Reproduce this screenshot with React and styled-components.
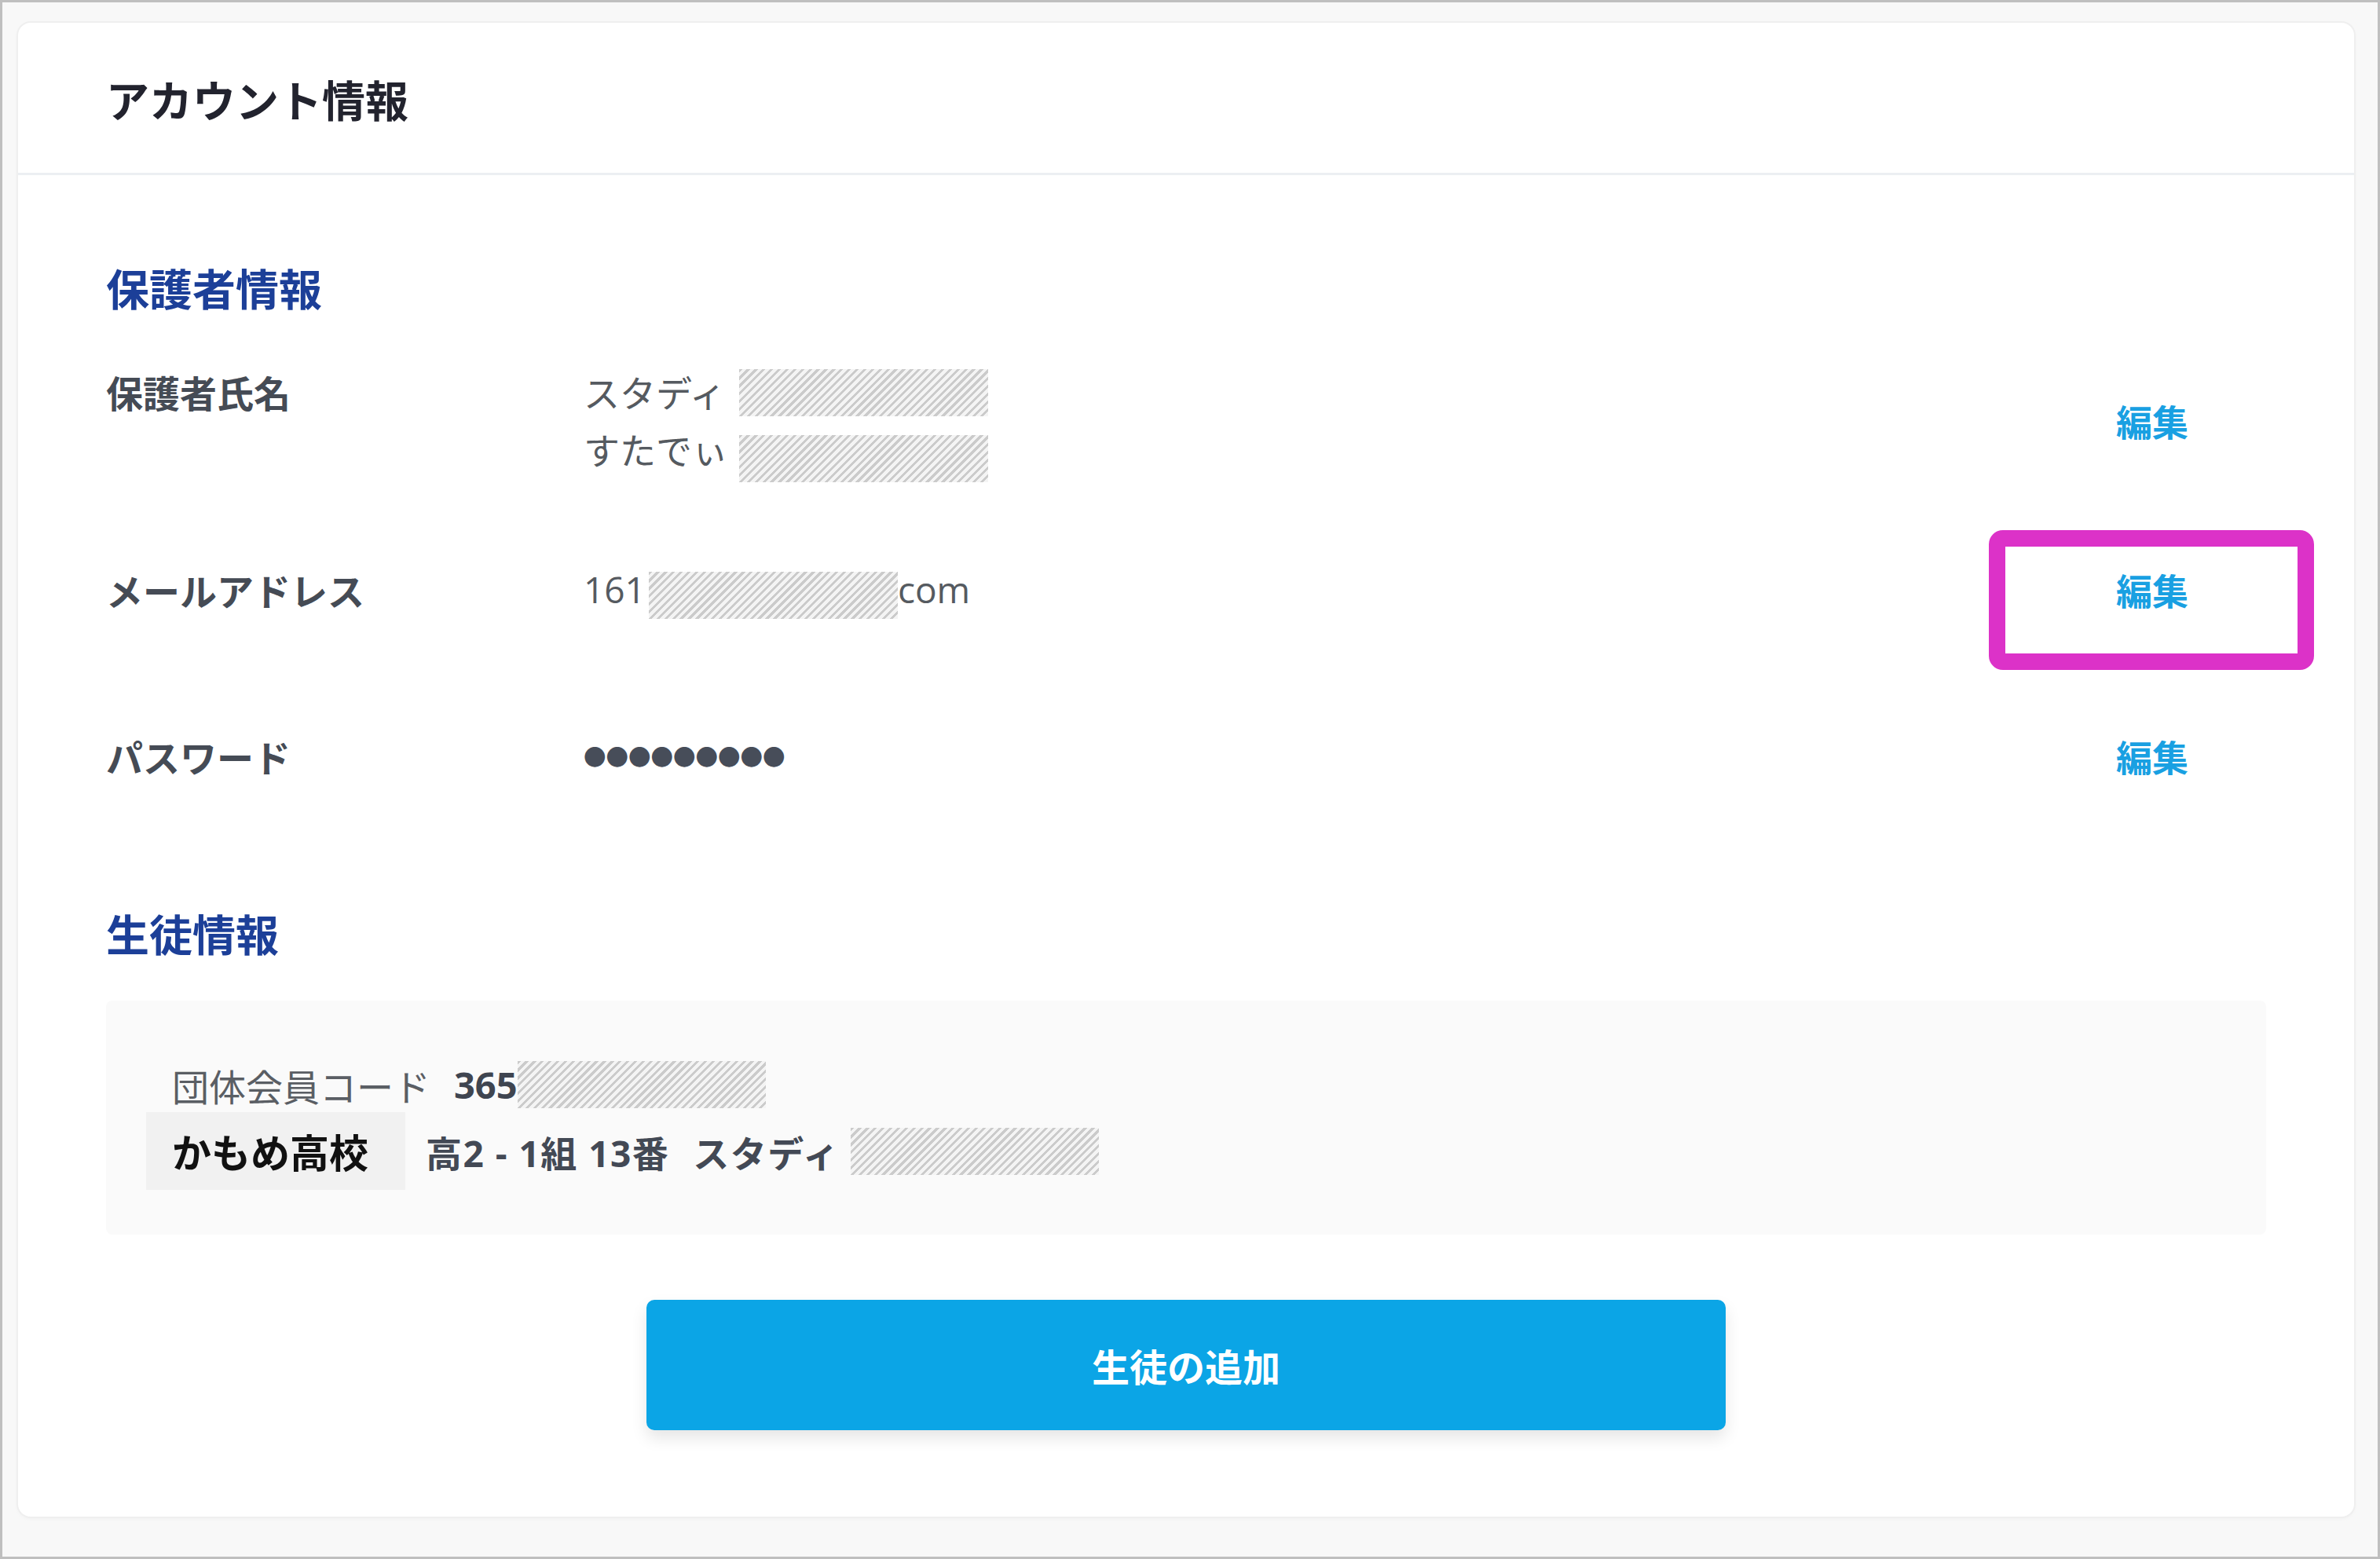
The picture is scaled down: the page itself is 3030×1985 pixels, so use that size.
import React from "react";
import styled, { createGlobalStyle } from "styled-components";

const GlobalStyle = createGlobalStyle`
  html, body {
    margin: 0;
    padding: 0;
  }
  body {
    font-family: "Open Sans", "Noto Sans CJK JP", sans-serif;
    background: #f8f8f8;
  }
`;

const jp = `"Noto Sans CJK JP", sans-serif`;

const Frame = styled.div`
  box-sizing: border-box;
  width: 3030px;
  height: 1985px;
  border: 3px solid #bfbfbf;
  padding: 26px 30px 0 20px;
  background: #f8f8f8;
`;

const Card = styled.section`
  background: #fff;
  border-radius: 16px;
  box-shadow: 0 0 0 2px #efefef, 0 2px 6px rgba(0, 0, 0, 0.04);
  padding-bottom: 110px;
`;

const CardHeader = styled.header`
  box-sizing: border-box;
  height: 194px;
  display: flex;
  align-items: center;
  padding: 0 0 0 112px;
  border-bottom: 3px solid #eceff2;
`;

const CardTitle = styled.h1`
  margin: 0;
  font-family: ${jp};
  font-size: 55px;
  font-weight: 700;
  color: #22232e;
`;

const CardBody = styled.div`
  padding: 0 112px;
`;

const SectionTitle = styled.h2`
  margin: ${(p) => p.$top}px 0 0;
  font-family: ${jp};
  font-size: 55px;
  line-height: 73px;
  font-weight: 700;
  color: #1c3f98;
`;

const Row = styled.div`
  display: grid;
  grid-template-columns: 608px 1fr 290px;
  margin-top: ${(p) => p.$top}px;
  line-height: 73px;
`;

const Label = styled.div`
  font-family: ${jp};
  font-size: 47px;
  font-weight: 700;
  color: #454b55;
`;

const Value = styled.div`
  font-size: 46px;
  color: #555a60;
`;

const Line = styled.div`
  display: flex;
  align-items: center;
  height: 73px;
`;

const NameText = styled.span`
  display: inline-block;
  width: 190px;
  font-family: ${jp};
`;

const Hatch = styled.span`
  display: inline-block;
  flex-shrink: 0;
  width: ${(p) => p.$w}px;
  height: ${(p) => p.$h}px;
  margin-left: ${(p) => p.$ml || 0}px;
  margin-top: ${(p) => p.$mt || 0}px;
  background: repeating-linear-gradient(
    135deg,
    #cbcbcb 0 3px,
    #f4f4f4 3px 7px
  );
`;

const Dots = styled.span`
  font-family: ${jp};
  font-size: 28.5px;
  color: #474d59;
`;

const EditCell = styled.div`
  position: relative;
  display: flex;
  align-items: center;
  justify-content: center;
`;

const EditLink = styled.a`
  font-family: ${jp};
  font-size: 46px;
  font-weight: 700;
  color: #19a0e2;
  cursor: pointer;
`;

const Highlight = styled.span`
  position: absolute;
  left: -63px;
  top: -39px;
  width: 414px;
  height: 178px;
  box-sizing: border-box;
  border: 21px solid #dc32c8;
  border-radius: 18px;
  pointer-events: none;
`;

const StudentBox = styled.div`
  margin-top: 50px;
  padding: 77px 51px 57px;
  background: #fafafa;
  border-radius: 8px;
`;

const CodeLine = styled.div`
  display: flex;
  align-items: center;
  height: 60px;
  padding-left: 33px;
  font-size: 47px;
  color: #5a5e64;
`;

const CodeLabel = styled.span`
  font-family: ${jp};
`;

const CodeNumber = styled.span`
  margin-left: 30px;
  font-weight: 700;
  color: #3f4550;
`;

const StudentRow = styled.div`
  display: flex;
  align-items: center;
  margin-top: 5px;
`;

const School = styled.div`
  height: 99px;
  line-height: 99px;
  padding: 0 47px 0 33px;
  background: #f1f1f1;
  font-family: ${jp};
  font-size: 50px;
  font-weight: 700;
  color: #111;
`;

const StudentInfo = styled.div`
  display: flex;
  align-items: center;
  margin-left: 26px;
  font-size: 46px;
  font-weight: 700;
  letter-spacing: 1.5px;
  color: #434955;
  white-space: pre;
`;

const StudentName = styled.span`
  margin-left: 30px;
  font-family: ${jp};
`;

const AddButton = styled.button`
  display: block;
  width: 1374px;
  height: 166px;
  margin: 83px auto 0;
  border: none;
  border-radius: 10px;
  background: #0ba5e6;
  box-shadow: 0 10px 20px rgba(0, 0, 0, 0.1);
  color: #fff;
  font-family: ${jp};
  font-size: 48px;
  font-weight: 700;
  cursor: pointer;
`;

export default function App() {
  return (
    <>
      <GlobalStyle />
      <Frame>
        <Card>
          <CardHeader>
            <CardTitle>アカウント情報</CardTitle>
          </CardHeader>
          <CardBody>
            <SectionTitle $top={106}>保護者情報</SectionTitle>

            <Row $top={60}>
              <Label>保護者氏名</Label>
              <Value>
                <Line>
                  <NameText>スタディ</NameText>
                  <Hatch $w={317} $h={60} $ml={8} $mt={2} />
                </Line>
                <Line>
                  <NameText>すたでぃ</NameText>
                  <Hatch $w={317} $h={60} $ml={8} $mt={25} />
                </Line>
              </Value>
              <EditCell>
                <EditLink>編集</EditLink>
              </EditCell>
            </Row>

            <Row $top={106}>
              <Label>メールアドレス</Label>
              <Value>
                <Line>
                  161
                  <Hatch $w={317} $h={60} $ml={4} $mt={14} />
                  com
                </Line>
              </Value>
              <EditCell>
                <EditLink>編集</EditLink>
                <Highlight />
              </EditCell>
            </Row>

            <Row $top={139}>
              <Label>パスワード</Label>
              <Value>
                <Line>
                  <Dots>●●●●●●●●●</Dots>
                </Line>
              </Value>
              <EditCell>
                <EditLink>編集</EditLink>
              </EditCell>
            </Row>

            <SectionTitle $top={152}>生徒情報</SectionTitle>

            <StudentBox>
              <CodeLine>
                <CodeLabel>団体会員コード</CodeLabel>
                <CodeNumber>365</CodeNumber>
                <Hatch $w={316} $h={60} />
              </CodeLine>
              <StudentRow>
                <School>かもめ高校</School>
                <StudentInfo>
                  <span>高2 - 1組 13番</span>
                  <StudentName>スタディ</StudentName>
                  <Hatch $w={316} $h={60} $ml={14} />
                </StudentInfo>
              </StudentRow>
            </StudentBox>

            <AddButton>生徒の追加</AddButton>
          </CardBody>
        </Card>
      </Frame>
    </>
  );
}
